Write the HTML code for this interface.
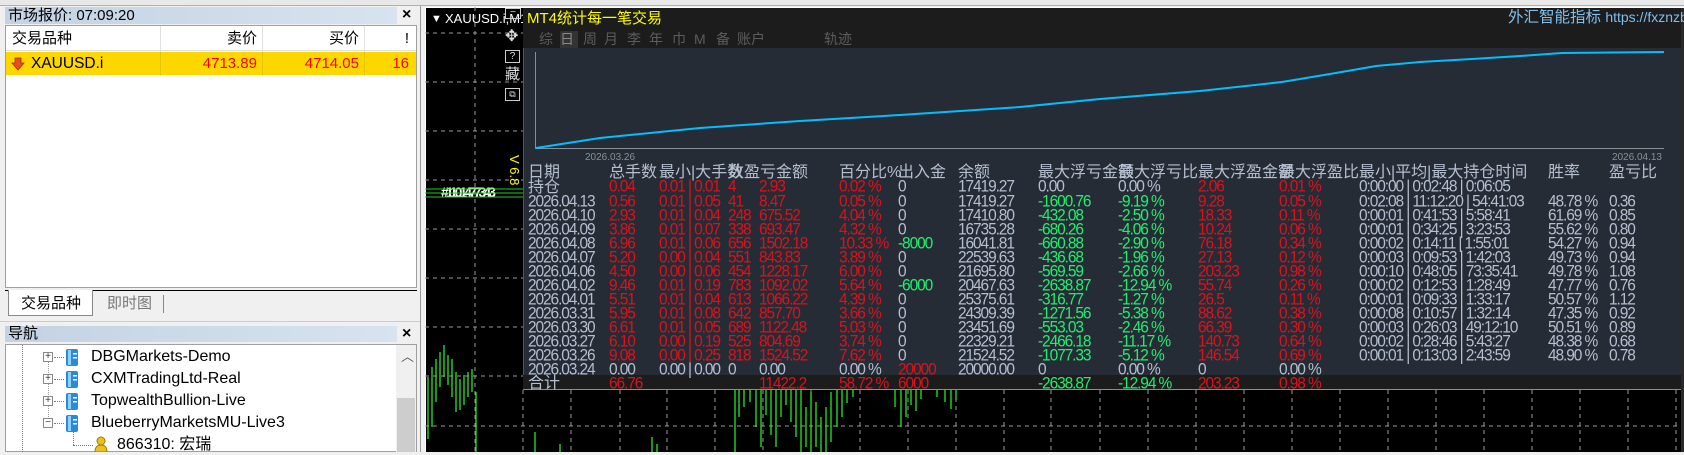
<!DOCTYPE html>
<html><head><meta charset="utf-8">
<style>
*{margin:0;padding:0;box-sizing:border-box}
body{width:1684px;height:452px;overflow:hidden;background:#f0f0f0;position:relative;font-family:"Liberation Sans","Noto Sans CJK SC",sans-serif}
.a{position:absolute;white-space:nowrap}
.t{position:absolute;white-space:nowrap;font-size:15.5px;letter-spacing:-1.1px;line-height:16px;transform:scaleY(1.08)}
.g{color:#b4bfcf}.r{color:#e0101a}.gr{color:#1ef06e}
.h{position:absolute;white-space:nowrap;font-size:16px;line-height:18px;color:#b4bfcf;top:164px}
.tab{position:absolute;top:31px;font-size:14px;color:#5c5c5c;line-height:17px}
</style></head><body>
<div class="a" style="left:0;top:0;width:1684px;height:6px;background:#e8e8e8;border-bottom:1px solid #b0b0b0"></div>

<div class="a" style="left:5px;top:7px;width:392px;height:17px;background:linear-gradient(90deg,#c3d3e3,#d7e3ef)"></div>
<div class="a" style="left:8px;top:6px;font-size:15px;line-height:19px;color:#000">市场报价: 07:09:20</div>
<div class="a" style="left:402px;top:5px;font-size:16px;line-height:20px;font-weight:bold;color:#000">×</div>
<div class="a" style="left:5px;top:25px;width:412px;height:263px;background:#fff;border:1px solid #a0a0a0"></div>
<div class="a" style="left:6px;top:26px;width:410px;height:25px;border-bottom:1px solid #e0e0e0"></div>
<div class="a" style="left:160px;top:26px;width:1px;height:50px;background:#e0e0e0"></div>
<div class="a" style="left:262px;top:26px;width:1px;height:50px;background:#e0e0e0"></div>
<div class="a" style="left:364px;top:26px;width:1px;height:50px;background:#e0e0e0"></div>
<div class="a" style="left:12px;top:29px;font-size:15px;line-height:19px">交易品种</div>
<div class="a" style="left:200px;top:29px;width:57px;text-align:right;font-size:15px;line-height:19px">卖价</div>
<div class="a" style="left:300px;top:29px;width:59px;text-align:right;font-size:15px;line-height:19px">买价</div>
<div class="a" style="left:380px;top:29px;width:29px;text-align:right;font-size:15px;line-height:19px">!</div>
<div class="a" style="left:6px;top:52px;width:410px;height:23px;background:#ffd700"></div>
<div class="a" style="left:160px;top:52px;width:1px;height:23px;background:#e5c400"></div>
<div class="a" style="left:262px;top:52px;width:1px;height:23px;background:#e5c400"></div>
<div class="a" style="left:364px;top:52px;width:1px;height:23px;background:#e5c400"></div>
<svg class="a" style="left:11px;top:57px" width="14" height="14" viewBox="0 0 14 14"><path d="M4 1h6v5h3l-6 7-6-7h3z" fill="#e8501a" stroke="#a02a00" stroke-width="0.8"/></svg>
<div class="a" style="left:31px;top:54px;font-size:15.5px;line-height:19px;color:#000">XAUUSD.i</div>
<div class="a" style="left:170px;top:54px;width:87px;text-align:right;font-size:15px;line-height:19px;color:#f00">4713.89</div>
<div class="a" style="left:270px;top:54px;width:89px;text-align:right;font-size:15px;line-height:19px;color:#f00">4714.05</div>
<div class="a" style="left:370px;top:54px;width:39px;text-align:right;font-size:15px;line-height:19px;color:#f00">16</div>
<div class="a" style="left:5px;top:290px;width:412px;height:1px;background:#000"></div>
<div class="a" style="left:8px;top:290px;width:85px;height:26px;background:#fff;border:1px solid #888;border-top:none"></div>
<div class="a" style="left:21px;top:294px;font-size:15px;line-height:19px">交易品种</div>
<div class="a" style="left:107px;top:294px;font-size:15px;line-height:19px;color:#777">即时图</div>
<div class="a" style="left:163px;top:295px;width:1px;height:18px;background:#888"></div>
<div class="a" style="left:0;top:321px;width:420px;height:1px;background:#ccc"></div>

<div class="a" style="left:5px;top:326px;width:392px;height:16px;background:linear-gradient(90deg,#c3d3e3,#d7e3ef)"></div>
<div class="a" style="left:8px;top:324px;font-size:15px;line-height:19px">导航</div>
<div class="a" style="left:402px;top:324px;font-size:16px;line-height:20px;font-weight:bold">×</div>
<div class="a" style="left:5px;top:344px;width:412px;height:108px;background:#fff;border:1px solid #a0a0a0"></div>
<div class="a" style="left:396px;top:345px;width:20px;height:107px;background:#f0f0f0"></div>
<div class="a" style="left:397px;top:398px;width:18px;height:54px;background:#cdcdcd"></div>
<div class="a" style="left:401px;top:346px;font-size:13px;color:#555">︿</div>
<div class="a" style="left:22px;top:345px;height:107px;border-left:1px dotted #777"></div>
<div class="a" style="left:48px;top:357px;height:66px;border-left:1px dotted #999"></div>
<div class="a" style="left:73px;top:431px;height:14px;border-left:1px dotted #777"></div>
<div class="a" style="left:73px;top:445px;width:20px;border-top:1px dotted #777"></div>

<div class="a" style="left:43px;top:352px;width:10px;height:10px;border:1px solid #888;background:#fff;font-size:10px;line-height:8px;text-align:center;color:#333">+</div>
<div class="a" style="left:43px;top:374px;width:10px;height:10px;border:1px solid #888;background:#fff;font-size:10px;line-height:8px;text-align:center;color:#333">+</div>
<div class="a" style="left:43px;top:396px;width:10px;height:10px;border:1px solid #888;background:#fff;font-size:10px;line-height:8px;text-align:center;color:#333">+</div>
<div class="a" style="left:43px;top:418px;width:10px;height:10px;border:1px solid #888;background:#fff;font-size:10px;line-height:8px;text-align:center;color:#333">−</div>
<div class="a" style="left:54px;top:357px;width:10px;border-top:1px dotted #777"></div>
<div class="a" style="left:54px;top:379px;width:10px;border-top:1px dotted #777"></div>
<div class="a" style="left:54px;top:401px;width:10px;border-top:1px dotted #777"></div>
<div class="a" style="left:54px;top:423px;width:10px;border-top:1px dotted #777"></div>
<svg class="a" style="left:65px;top:348px" width="15" height="96" viewBox="0 0 15 96">
<g id="sv"><rect x="1" y="1" width="12" height="17" rx="2" fill="#2b8ad6"/><rect x="3" y="2" width="3" height="15" fill="#8fd0ff"/><rect x="8" y="5" width="4" height="1.5" fill="#fff"/><rect x="8" y="9" width="4" height="1.5" fill="#fff"/></g>
<use href="#sv" y="22"/><use href="#sv" y="44"/><use href="#sv" y="66"/>
</svg>
<div class="a" style="left:91px;top:347px;font-size:16px;line-height:20px">DBGMarkets-Demo</div>
<div class="a" style="left:91px;top:369px;font-size:16px;line-height:20px">CXMTradingLtd-Real</div>
<div class="a" style="left:91px;top:391px;font-size:16px;line-height:20px">TopwealthBullion-Live</div>
<div class="a" style="left:91px;top:413px;font-size:16px;line-height:20px">BlueberryMarketsMU-Live3</div>
<svg class="a" style="left:94px;top:436px" width="14" height="16" viewBox="0 0 14 16"><circle cx="7" cy="5" r="4" fill="#e8c020" stroke="#a07800"/><path d="M1 16c0-6 3-7 6-7s6 1 6 7z" fill="#e8c020" stroke="#a07800"/></svg>
<div class="a" style="left:117px;top:435px;font-size:16px;line-height:20px">866310: 宏瑞</div>

<div class="a" style="left:420px;top:6px;width:5px;height:446px;background:#f0f0f0;border-left:1px solid #999"></div>
<div class="a" style="left:425px;top:7px;width:1259px;height:445px;background:#000;border-top:1px solid #fff;border-left:1px solid #fff"></div>
<svg class="a" style="left:425px;top:7px" width="1259" height="445">
<g stroke="#9a9a9a" stroke-dasharray="4,4" stroke-width="1">
<line x1="0" y1="26" x2="100" y2="26"/><line x1="0" y1="75" x2="100" y2="75"/><line x1="0" y1="124" x2="100" y2="124"/><line x1="0" y1="173" x2="100" y2="173"/><line x1="0" y1="222" x2="100" y2="222"/><line x1="0" y1="271" x2="100" y2="271"/><line x1="0" y1="320" x2="100" y2="320"/><line x1="0" y1="369" x2="100" y2="369"/><line x1="0" y1="419" x2="1259" y2="419"/>
<line x1="50" y1="0" x2="50" y2="445"/><line x1="98" y1="383" x2="98" y2="445"/><line x1="146" y1="383" x2="146" y2="445"/><line x1="195" y1="383" x2="195" y2="445"/><line x1="242" y1="383" x2="242" y2="445"/><line x1="290" y1="383" x2="290" y2="445"/><line x1="338" y1="383" x2="338" y2="445"/><line x1="386" y1="383" x2="386" y2="445"/><line x1="435" y1="383" x2="435" y2="445"/><line x1="483" y1="383" x2="483" y2="445"/><line x1="531" y1="383" x2="531" y2="445"/><line x1="579" y1="383" x2="579" y2="445"/><line x1="626" y1="383" x2="626" y2="445"/><line x1="675" y1="383" x2="675" y2="445"/><line x1="723" y1="383" x2="723" y2="445"/><line x1="771" y1="383" x2="771" y2="445"/><line x1="819" y1="383" x2="819" y2="445"/><line x1="867" y1="383" x2="867" y2="445"/><line x1="915" y1="383" x2="915" y2="445"/><line x1="963" y1="383" x2="963" y2="445"/><line x1="1011" y1="383" x2="1011" y2="445"/><line x1="1059" y1="383" x2="1059" y2="445"/><line x1="1107" y1="383" x2="1107" y2="445"/><line x1="1155" y1="383" x2="1155" y2="445"/><line x1="1203" y1="383" x2="1203" y2="445"/><line x1="1251" y1="383" x2="1251" y2="445"/>
</g>
<g stroke="#22ee22" stroke-width="1.3">
<line x1="3" y1="370" x2="3" y2="432"/><line x1="7" y1="360" x2="7" y2="420"/><line x1="11" y1="352" x2="11" y2="395"/><line x1="15" y1="345" x2="15" y2="380"/><line x1="19" y1="338" x2="19" y2="370"/><line x1="23" y1="348" x2="23" y2="378"/><line x1="27" y1="352" x2="27" y2="390"/><line x1="31" y1="365" x2="31" y2="405"/><line x1="35" y1="372" x2="35" y2="403"/><line x1="39" y1="368" x2="39" y2="398"/><line x1="43" y1="365" x2="43" y2="390"/><line x1="47" y1="362" x2="47" y2="385"/><line x1="51" y1="385" x2="51" y2="445"/>
<line x1="110" y1="425" x2="110" y2="445"/><line x1="135" y1="437" x2="135" y2="445"/><line x1="227" y1="430" x2="227" y2="445"/><line x1="232" y1="437" x2="232" y2="445"/>
<line x1="310" y1="383" x2="310" y2="445"/><line x1="314" y1="383" x2="314" y2="410"/><line x1="319" y1="383" x2="319" y2="400"/><line x1="325" y1="383" x2="325" y2="395"/><line x1="331" y1="383" x2="331" y2="420"/><line x1="336" y1="383" x2="336" y2="440"/><line x1="341" y1="383" x2="341" y2="408"/><line x1="346" y1="383" x2="346" y2="428"/><line x1="351" y1="383" x2="351" y2="440"/><line x1="356" y1="383" x2="356" y2="410"/><line x1="361" y1="383" x2="361" y2="398"/><line x1="366" y1="383" x2="366" y2="415"/><line x1="371" y1="383" x2="371" y2="430"/><line x1="376" y1="383" x2="376" y2="445"/><line x1="381" y1="400" x2="381" y2="440"/><line x1="386" y1="385" x2="386" y2="445"/><line x1="391" y1="395" x2="391" y2="440"/><line x1="396" y1="410" x2="396" y2="445"/><line x1="401" y1="400" x2="401" y2="445"/><line x1="406" y1="385" x2="406" y2="435"/><line x1="412" y1="383" x2="412" y2="420"/><line x1="417" y1="383" x2="417" y2="410"/><line x1="422" y1="383" x2="422" y2="396"/><line x1="428" y1="383" x2="428" y2="390"/>
<line x1="470" y1="383" x2="470" y2="400"/><line x1="476" y1="383" x2="476" y2="420"/><line x1="481" y1="383" x2="481" y2="410"/><line x1="486" y1="383" x2="486" y2="398"/><line x1="491" y1="383" x2="491" y2="404"/><line x1="496" y1="383" x2="496" y2="392"/>
<line x1="512" y1="383" x2="512" y2="390"/><line x1="520" y1="383" x2="520" y2="395"/><line x1="526" y1="383" x2="526" y2="402"/><line x1="531" y1="383" x2="531" y2="393"/>
</g>
<text x="6" y="15" fill="#fff" font-size="11">▼</text>
<text x="20" y="16" fill="#fff" font-size="13" font-family="Liberation Sans">XAUUSD.i,M15</text>
<text x="16" y="190" fill="#fff" font-size="14" font-family="Liberation Sans" font-weight="bold" letter-spacing="-3">#1101477343</text>
<g stroke="#2c2" stroke-width="1"><line x1="0" y1="182" x2="98" y2="182"/><line x1="0" y1="186" x2="98" y2="186"/><line x1="0" y1="190" x2="98" y2="190"/></g>
<text x="0" y="0" fill="#ff0" font-size="13" transform="translate(85,148) rotate(90)">V 6.8</text>
</svg>
<div class="a" style="left:505px;top:8px;width:16px;height:11px;border:1px solid #ccc;color:#ddd;font-size:10px;line-height:8px;text-align:center">−</div>
<div class="a" style="left:505px;top:29px;color:#ddd;font-size:16px;line-height:16px">✥</div>
<div class="a" style="left:505px;top:50px;width:15px;height:13px;border:1px solid #ccc;color:#ddd;font-size:10px;line-height:11px;text-align:center">?</div>
<div class="a" style="left:505px;top:67px;color:#ddd;font-size:15px;line-height:16px">藏</div>
<div class="a" style="left:505px;top:88px;width:15px;height:13px;border:1px solid #ccc;color:#ddd;font-size:9px;line-height:11px;text-align:center">⧉</div>

<div class="a" style="left:523px;top:8px;width:1159px;height:41px;background:#1c1c1c"></div>
<div class="a" style="left:523px;top:48px;width:1159px;height:342px;background:#262c36;border-bottom:2px solid #8a8f96;border-left:1px solid #555"></div>
<div class="a" style="left:523px;top:375px;width:1159px;height:14px;background:#1c1c1c"></div>
<div class="a" style="left:1681px;top:8px;width:3px;height:444px;background:#2a2a2a"></div>
<div class="a" style="left:527px;top:9px;font-size:15px;line-height:19px;color:#ffff00">MT4统计每一笔交易</div>
<div class="a" style="left:1508px;top:8px;font-size:15.5px;line-height:19px;color:#7fbfee">外汇智能指标 <span style="font-size:14px">https://fxznzb</span></div>
<div class="a" style="left:560px;top:31px;width:18px;height:17px;background:#333"></div>
<div class="tab" style="left:539px">综</div><div class="tab" style="left:560px;color:#888">日</div><div class="tab" style="left:583px">周</div><div class="tab" style="left:604px">月</div><div class="tab" style="left:627px">李</div><div class="tab" style="left:649px">年</div><div class="tab" style="left:672px">巾</div><div class="tab" style="left:694px">M</div><div class="tab" style="left:716px">备</div><div class="tab" style="left:737px">账户</div><div class="tab" style="left:824px">轨迹</div>
<svg class="a" style="left:523px;top:48px" width="1159" height="115">
<line x1="12.5" y1="4" x2="12.5" y2="100" stroke="#8a8f96"/>
<line x1="12" y1="100.5" x2="1141" y2="100.5" stroke="#8a8f96"/>
<polyline fill="none" stroke="#00bfff" stroke-width="2" points="13,100 77,90 177,80 277,73 377,67 497,59 577,51 677,43 759,34 807,26 853,18 897,14 949,11 997,8 1039,5 1141,4"/>
<text x="62" y="112" fill="#8a8f96" font-size="10" font-family="Liberation Sans">2026.03.26</text>
<text x="1139" y="112" fill="#8a8f96" font-size="10" font-family="Liberation Sans" text-anchor="end">2026.04.13</text>
</svg>
<div class="h" style="left:528px">日期</div>
<div class="h" style="left:609px">总手数</div>
<div class="h" style="left:659px">最小|大手数</div>
<div class="h" style="left:728px">数</div>
<div class="h" style="left:744px">盈亏金额</div>
<div class="h" style="left:839px">百分比%</div>
<div class="h" style="left:898px">出入金</div>
<div class="h" style="left:958px">余额</div>
<div class="h" style="left:1038px">最大浮亏金额</div>
<div class="h" style="left:1118px">最大浮亏比</div>
<div class="h" style="left:1198px">最大浮盈金额</div>
<div class="h" style="left:1279px">最大浮盈比</div>
<div class="h" style="left:1359px">最小|平均|最大持仓时间</div>
<div class="h" style="left:1548px">胜率</div>
<div class="h" style="left:1609px">盈亏比</div>

<div class="a" style="left:0;top:179px">
<div class="h" style="left:528px;top:0">持仓</div>
<span class="t r" style="left:609px">0.04</span><span class="t r" style="left:659px">0.01 | 0.01</span><span class="t r" style="left:728px">4</span><span class="t r" style="left:759px">2.93</span><span class="t r" style="left:839px">0.02 %</span><span class="t g" style="left:898px">0</span><span class="t g" style="left:958px">17419.27</span><span class="t g" style="left:1038px">0.00</span><span class="t g" style="left:1118px">0.00 %</span><span class="t r" style="left:1198px">2.06</span><span class="t r" style="left:1279px">0.01 %</span><span class="t g" style="left:1359px">0:00:00 | 0:02:48 | 0:06:05</span>
</div>
<div class="a" style="left:0;top:194px">
<span class="t g" style="left:528px">2026.04.13</span><span class="t r" style="left:609px">0.56</span><span class="t r" style="left:659px">0.01 | 0.05</span><span class="t r" style="left:728px">41</span><span class="t r" style="left:759px">8.47</span><span class="t r" style="left:839px">0.05 %</span><span class="t g" style="left:898px">0</span><span class="t g" style="left:958px">17419.27</span><span class="t gr" style="left:1038px">-1600.76</span><span class="t gr" style="left:1118px">-9.19 %</span><span class="t r" style="left:1198px">9.28</span><span class="t r" style="left:1279px">0.05 %</span><span class="t g" style="left:1359px">0:02:08 | 11:12:20 | 54:41:03</span><span class="t g" style="left:1548px">48.78 %</span><span class="t g" style="left:1609px">0.36</span>
</div>
<div class="a" style="left:0;top:208px">
<span class="t g" style="left:528px">2026.04.10</span><span class="t r" style="left:609px">2.93</span><span class="t r" style="left:659px">0.01 | 0.04</span><span class="t r" style="left:728px">248</span><span class="t r" style="left:759px">675.52</span><span class="t r" style="left:839px">4.04 %</span><span class="t g" style="left:898px">0</span><span class="t g" style="left:958px">17410.80</span><span class="t gr" style="left:1038px">-432.08</span><span class="t gr" style="left:1118px">-2.50 %</span><span class="t r" style="left:1198px">18.33</span><span class="t r" style="left:1279px">0.11 %</span><span class="t g" style="left:1359px">0:00:01 | 0:41:53 | 5:58:41</span><span class="t g" style="left:1548px">61.69 %</span><span class="t g" style="left:1609px">0.85</span>
</div>
<div class="a" style="left:0;top:222px">
<span class="t g" style="left:528px">2026.04.09</span><span class="t r" style="left:609px">3.86</span><span class="t r" style="left:659px">0.01 | 0.07</span><span class="t r" style="left:728px">338</span><span class="t r" style="left:759px">693.47</span><span class="t r" style="left:839px">4.32 %</span><span class="t g" style="left:898px">0</span><span class="t g" style="left:958px">16735.28</span><span class="t gr" style="left:1038px">-680.26</span><span class="t gr" style="left:1118px">-4.06 %</span><span class="t r" style="left:1198px">10.24</span><span class="t r" style="left:1279px">0.06 %</span><span class="t g" style="left:1359px">0:00:01 | 0:34:25 | 3:23:53</span><span class="t g" style="left:1548px">55.62 %</span><span class="t g" style="left:1609px">0.80</span>
</div>
<div class="a" style="left:0;top:236px">
<span class="t g" style="left:528px">2026.04.08</span><span class="t r" style="left:609px">6.96</span><span class="t r" style="left:659px">0.01 | 0.06</span><span class="t r" style="left:728px">656</span><span class="t r" style="left:759px">1502.18</span><span class="t r" style="left:839px">10.33 %</span><span class="t gr" style="left:898px">-8000</span><span class="t g" style="left:958px">16041.81</span><span class="t gr" style="left:1038px">-660.88</span><span class="t gr" style="left:1118px">-2.90 %</span><span class="t r" style="left:1198px">76.18</span><span class="t r" style="left:1279px">0.34 %</span><span class="t g" style="left:1359px">0:00:02 | 0:14:11 | 1:55:01</span><span class="t g" style="left:1548px">54.27 %</span><span class="t g" style="left:1609px">0.94</span>
</div>
<div class="a" style="left:0;top:250px">
<span class="t g" style="left:528px">2026.04.07</span><span class="t r" style="left:609px">5.20</span><span class="t r" style="left:659px">0.00 | 0.04</span><span class="t r" style="left:728px">551</span><span class="t r" style="left:759px">843.83</span><span class="t r" style="left:839px">3.89 %</span><span class="t g" style="left:898px">0</span><span class="t g" style="left:958px">22539.63</span><span class="t gr" style="left:1038px">-436.68</span><span class="t gr" style="left:1118px">-1.96 %</span><span class="t r" style="left:1198px">27.13</span><span class="t r" style="left:1279px">0.12 %</span><span class="t g" style="left:1359px">0:00:03 | 0:09:53 | 1:42:03</span><span class="t g" style="left:1548px">49.73 %</span><span class="t g" style="left:1609px">0.94</span>
</div>
<div class="a" style="left:0;top:264px">
<span class="t g" style="left:528px">2026.04.06</span><span class="t r" style="left:609px">4.50</span><span class="t r" style="left:659px">0.00 | 0.06</span><span class="t r" style="left:728px">454</span><span class="t r" style="left:759px">1228.17</span><span class="t r" style="left:839px">6.00 %</span><span class="t g" style="left:898px">0</span><span class="t g" style="left:958px">21695.80</span><span class="t gr" style="left:1038px">-569.59</span><span class="t gr" style="left:1118px">-2.66 %</span><span class="t r" style="left:1198px">203.23</span><span class="t r" style="left:1279px">0.98 %</span><span class="t g" style="left:1359px">0:00:10 | 0:48:05 | 73:35:41</span><span class="t g" style="left:1548px">49.78 %</span><span class="t g" style="left:1609px">1.08</span>
</div>
<div class="a" style="left:0;top:278px">
<span class="t g" style="left:528px">2026.04.02</span><span class="t r" style="left:609px">9.46</span><span class="t r" style="left:659px">0.01 | 0.19</span><span class="t r" style="left:728px">783</span><span class="t r" style="left:759px">1092.02</span><span class="t r" style="left:839px">5.64 %</span><span class="t gr" style="left:898px">-6000</span><span class="t g" style="left:958px">20467.63</span><span class="t gr" style="left:1038px">-2638.87</span><span class="t gr" style="left:1118px">-12.94 %</span><span class="t r" style="left:1198px">55.74</span><span class="t r" style="left:1279px">0.26 %</span><span class="t g" style="left:1359px">0:00:02 | 0:12:53 | 1:28:49</span><span class="t g" style="left:1548px">47.77 %</span><span class="t g" style="left:1609px">0.76</span>
</div>
<div class="a" style="left:0;top:292px">
<span class="t g" style="left:528px">2026.04.01</span><span class="t r" style="left:609px">5.51</span><span class="t r" style="left:659px">0.01 | 0.04</span><span class="t r" style="left:728px">613</span><span class="t r" style="left:759px">1066.22</span><span class="t r" style="left:839px">4.39 %</span><span class="t g" style="left:898px">0</span><span class="t g" style="left:958px">25375.61</span><span class="t gr" style="left:1038px">-316.77</span><span class="t gr" style="left:1118px">-1.27 %</span><span class="t r" style="left:1198px">26.5</span><span class="t r" style="left:1279px">0.11 %</span><span class="t g" style="left:1359px">0:00:01 | 0:09:33 | 1:33:17</span><span class="t g" style="left:1548px">50.57 %</span><span class="t g" style="left:1609px">1.12</span>
</div>
<div class="a" style="left:0;top:306px">
<span class="t g" style="left:528px">2026.03.31</span><span class="t r" style="left:609px">5.95</span><span class="t r" style="left:659px">0.01 | 0.08</span><span class="t r" style="left:728px">642</span><span class="t r" style="left:759px">857.70</span><span class="t r" style="left:839px">3.66 %</span><span class="t g" style="left:898px">0</span><span class="t g" style="left:958px">24309.39</span><span class="t gr" style="left:1038px">-1271.56</span><span class="t gr" style="left:1118px">-5.38 %</span><span class="t r" style="left:1198px">88.62</span><span class="t r" style="left:1279px">0.38 %</span><span class="t g" style="left:1359px">0:00:08 | 0:10:57 | 1:32:14</span><span class="t g" style="left:1548px">47.35 %</span><span class="t g" style="left:1609px">0.92</span>
</div>
<div class="a" style="left:0;top:320px">
<span class="t g" style="left:528px">2026.03.30</span><span class="t r" style="left:609px">6.61</span><span class="t r" style="left:659px">0.01 | 0.05</span><span class="t r" style="left:728px">689</span><span class="t r" style="left:759px">1122.48</span><span class="t r" style="left:839px">5.03 %</span><span class="t g" style="left:898px">0</span><span class="t g" style="left:958px">23451.69</span><span class="t gr" style="left:1038px">-553.03</span><span class="t gr" style="left:1118px">-2.46 %</span><span class="t r" style="left:1198px">66.39</span><span class="t r" style="left:1279px">0.30 %</span><span class="t g" style="left:1359px">0:00:03 | 0:26:03 | 49:12:10</span><span class="t g" style="left:1548px">50.51 %</span><span class="t g" style="left:1609px">0.89</span>
</div>
<div class="a" style="left:0;top:334px">
<span class="t g" style="left:528px">2026.03.27</span><span class="t r" style="left:609px">6.10</span><span class="t r" style="left:659px">0.00 | 0.19</span><span class="t r" style="left:728px">525</span><span class="t r" style="left:759px">804.69</span><span class="t r" style="left:839px">3.74 %</span><span class="t g" style="left:898px">0</span><span class="t g" style="left:958px">22329.21</span><span class="t gr" style="left:1038px">-2466.18</span><span class="t gr" style="left:1118px">-11.17 %</span><span class="t r" style="left:1198px">140.73</span><span class="t r" style="left:1279px">0.64 %</span><span class="t g" style="left:1359px">0:00:02 | 0:28:46 | 5:43:27</span><span class="t g" style="left:1548px">48.38 %</span><span class="t g" style="left:1609px">0.68</span>
</div>
<div class="a" style="left:0;top:348px">
<span class="t g" style="left:528px">2026.03.26</span><span class="t r" style="left:609px">9.08</span><span class="t r" style="left:659px">0.00 | 0.25</span><span class="t r" style="left:728px">818</span><span class="t r" style="left:759px">1524.52</span><span class="t r" style="left:839px">7.62 %</span><span class="t g" style="left:898px">0</span><span class="t g" style="left:958px">21524.52</span><span class="t gr" style="left:1038px">-1077.33</span><span class="t gr" style="left:1118px">-5.12 %</span><span class="t r" style="left:1198px">146.54</span><span class="t r" style="left:1279px">0.69 %</span><span class="t g" style="left:1359px">0:00:01 | 0:13:03 | 2:43:59</span><span class="t g" style="left:1548px">48.90 %</span><span class="t g" style="left:1609px">0.78</span>
</div>
<div class="a" style="left:0;top:362px">
<span class="t g" style="left:528px">2026.03.24</span><span class="t g" style="left:609px">0.00</span><span class="t g" style="left:659px">0.00 | 0.00</span><span class="t g" style="left:728px">0</span><span class="t g" style="left:759px">0.00</span><span class="t g" style="left:839px">0.00 %</span><span class="t r" style="left:898px">20000</span><span class="t g" style="left:958px">20000.00</span><span class="t g" style="left:1038px">0</span><span class="t g" style="left:1118px">0.00 %</span><span class="t g" style="left:1198px">0</span><span class="t g" style="left:1279px">0.00 %</span>
</div>
<div class="a" style="left:0;top:376px">
<div class="h" style="left:528px;top:-1px">合计</div>
<span class="t r" style="left:609px">66.76</span><span class="t r" style="left:759px">11422.2</span><span class="t r" style="left:839px">58.72 %</span><span class="t r" style="left:898px">6000</span><span class="t gr" style="left:1038px">-2638.87</span><span class="t gr" style="left:1118px">-12.94 %</span><span class="t r" style="left:1198px">203.23</span><span class="t r" style="left:1279px">0.98 %</span>
</div>
</body></html>
